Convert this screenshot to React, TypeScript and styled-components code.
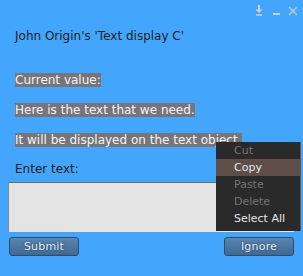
import React from 'react';
import styled, { createGlobalStyle } from 'styled-components';

const GlobalStyle = createGlobalStyle`
  html, body {
    margin: 0;
    padding: 0;
    background: #44a5fc;
  }
`;

const Floater = styled.div`
  position: relative;
  width: 303px;
  height: 276px;
  box-sizing: border-box;
  padding: 0 9px 0 8px;
  background: #44a5fc;
  font-family: 'DejaVu Sans', 'Liberation Sans', sans-serif;
  font-size: 12px;
  line-height: 14px;
  color: #1c1f24;
  display: flex;
  flex-direction: column;
  overflow: hidden;
`;

const TitleBar = styled.div`
  height: 20px;
  display: flex;
  justify-content: flex-end;
  align-items: flex-start;
  margin-right: -5px;
`;

const TitleIcon = styled.svg`
  display: block;
  width: 16px;
  height: 20px;
`;

const Heading = styled.div`
  margin-top: 9px;
  padding-left: 7px;
`;

const ValueBlock = styled.div`
  margin-top: 30px;
  padding-left: 7px;
  display: flex;
  flex-direction: column;
  gap: 16px;
`;

const Line = styled.div`
  white-space: nowrap;
`;

const Selected = styled.span`
  background: #78757a;
  color: #f4f4f4;
`;

const Label = styled.div`
  margin-top: 15px;
  padding-left: 7px;
`;

const TextArea = styled.div`
  margin-top: 6px;
  height: 50px;
  box-sizing: border-box;
  border-top: 1px solid #6b6b6b;
  border-left: 1px solid #8a8a8a;
  background: #e4e4e4;
`;

const ButtonRow = styled.div`
  margin-top: 5px;
  display: flex;
  justify-content: space-between;
  padding-left: 1px;
`;

const Button = styled.div`
  width: 70px;
  height: 19px;
  box-sizing: border-box;
  border: 1px solid #2b4d70;
  border-radius: 3px;
  background: linear-gradient(#5985b0, #3f6993);
  color: #e9eef4;
  font-size: 11px;
  display: flex;
  align-items: center;
  justify-content: center;
  text-shadow: 0 0 2px #1d3550;
  letter-spacing: 0.2px;
`;

const Menu = styled.div`
  position: absolute;
  left: 216px;
  top: 142px;
  width: 85px;
  height: 89px;
  box-sizing: border-box;
  background: #2a2a2a;
  border-right: 1px solid #5a5a5a;
  font-size: 11px;
`;

const MenuItem = styled.div<{ $disabled?: boolean; $active?: boolean }>`
  height: 17px;
  line-height: 17px;
  padding-left: 18px;
  color: ${({ $disabled }) => ($disabled ? '#747474' : '#e6e6e6')};
  background: ${({ $active }) => ($active ? '#5d4f47' : 'transparent')};
`;

const DownloadIcon = () => (
  <TitleIcon viewBox="0 0 16 20">
    <rect x="7" y="5" width="2" height="5" fill="#c9d3dd" />
    <path d="M4.5 9.5 L11.5 9.5 L8 13 Z" fill="#c9d3dd" />
    <rect x="5" y="14" width="6" height="2" fill="#b8c2cc" />
  </TitleIcon>
);

const MinimizeIcon = () => (
  <TitleIcon viewBox="0 0 16 20">
    <rect x="6" y="13" width="7" height="2" fill="#c9d3dd" />
  </TitleIcon>
);

const CloseIcon = () => (
  <TitleIcon viewBox="0 0 16 20">
    <path d="M6 7 L14 15 M14 7 L6 15" stroke="#b8c6d4" strokeWidth="1.5" />
  </TitleIcon>
);

export default function App() {
  return (
    <>
      <GlobalStyle />
      <Floater>
        <TitleBar>
          <DownloadIcon />
          <MinimizeIcon />
          <CloseIcon />
        </TitleBar>
        <Heading>John Origin's 'Text display C'</Heading>
        <ValueBlock>
          <Line>
            <Selected>Current value:</Selected>
          </Line>
          <Line>
            <Selected>Here is the text that we need.</Selected>
          </Line>
          <Line>
            <Selected>It will be displayed on the text object.</Selected>
          </Line>
        </ValueBlock>
        <Label>Enter text:</Label>
        <TextArea />
        <ButtonRow>
          <Button>Submit</Button>
          <Button>Ignore</Button>
        </ButtonRow>
        <Menu>
          <MenuItem $disabled>Cut</MenuItem>
          <MenuItem $active>Copy</MenuItem>
          <MenuItem $disabled>Paste</MenuItem>
          <MenuItem $disabled>Delete</MenuItem>
          <MenuItem>Select All</MenuItem>
        </Menu>
      </Floater>
    </>
  );
}
